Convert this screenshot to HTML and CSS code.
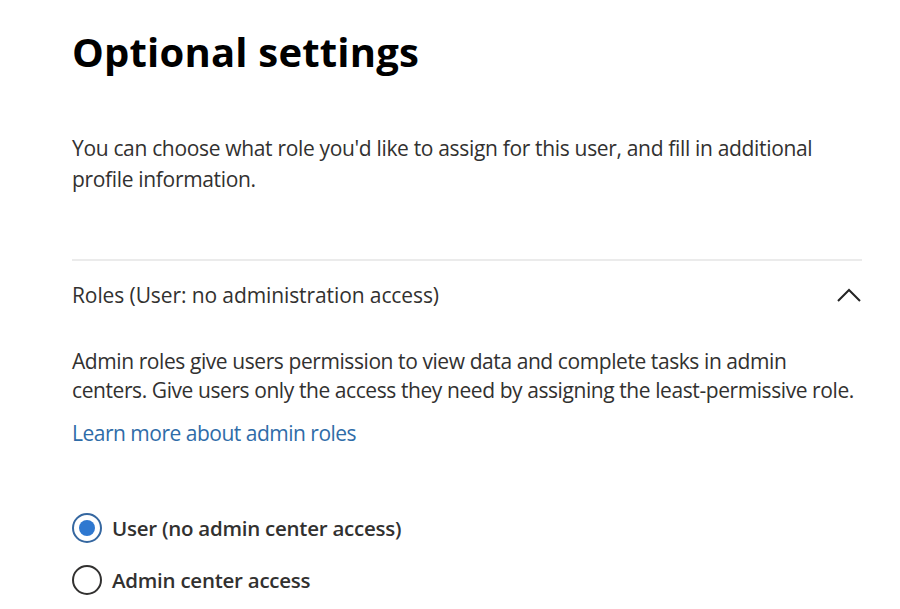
FILE: index.html
```html
<!DOCTYPE html>
<html lang="en">
<head>
<meta charset="utf-8">
<title>Optional settings</title>
<link rel="stylesheet" href="styles.css">
</head>
<body>
<main class="page">
  <h1 class="title">Optional settings</h1>
  <p class="intro">You can choose what role you'd like to assign for this user, and fill in additional profile information.</p>
  <section class="section">
    <div class="section-head">
      <h2 class="section-title">Roles (User: no administration access)</h2>
      <svg class="chevron" width="24" height="14" viewBox="0 0 24 14" aria-hidden="true"><path d="M1 13 L12 2 L23 13" fill="none" stroke="#242424" stroke-width="2"/></svg>
    </div>
    <p class="desc">Admin roles give users permission to view data and complete tasks in admin centers. Give users only the access they need by assigning the least-permissive role.</p>
    <a class="link" href="#">Learn more about admin roles</a>
    <div class="radios">
      <label class="radio"><span class="circle checked"><span class="dot"></span></span><span class="radio-label">User (no admin center access)</span></label>
      <label class="radio"><span class="circle"></span><span class="radio-label">Admin center access</span></label>
    </div>
  </section>
</main>
</body>
</html>
```
FILE: styles.css
```css
* { box-sizing: border-box; }
html, body { margin: 0; padding: 0; background: #fff; }
body { font-family: "Open Sans", "Noto Sans", sans-serif; color: #323130; }
.page { width: 790px; margin-left: 72px; padding-top: 24px; }
.title { margin: 0; font-size: 40px; font-weight: 700; color: #000; line-height: 56px; letter-spacing: 0.2px; }
.intro { margin: 53px 0 0; font-size: 21px; line-height: 31px; letter-spacing: -0.33px; }
.section { margin-top: 64px; border-top: 2px solid #ebebeb; }
.section-head { display: flex; justify-content: space-between; align-items: center; height: 68px; }
.section-title { margin: 0; font-size: 21px; font-weight: 400; color: #323130; letter-spacing: -0.1px; }
.chevron { margin-right: 1px; }
.desc { margin: 18px 0 0; font-size: 21px; line-height: 29px; letter-spacing: -0.42px; }
.link { display: block; margin-top: 14px; font-size: 21px; line-height: 29px; color: #2f6ca8; text-decoration: none; letter-spacing: -0.5px; }
.radios { margin-top: 65px; display: flex; flex-direction: column; gap: 22px; }
.radio { display: flex; align-items: center; gap: 10px; height: 30px; }
.circle { width: 30px; height: 30px; border-radius: 50%; border: 2px solid #323130; display: flex; align-items: center; justify-content: center; }
.circle.checked { border-color: #3567a0; }
.dot { width: 16px; height: 16px; border-radius: 50%; background: #2f78d0; }
.radio-label { font-size: 20.5px; font-weight: 600; color: #323130; letter-spacing: -0.25px; }
```
